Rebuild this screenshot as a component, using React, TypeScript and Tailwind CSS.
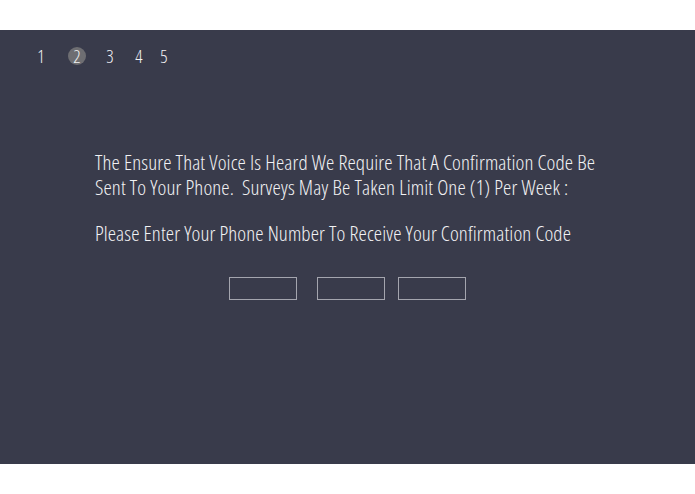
const steps = [
  { n: 1, cls: 'ml-[32px]' },
  { n: 2, cls: 'ml-[18px] rounded-full bg-[#6e6e72]' },
  { n: 3, cls: 'ml-[15px]' },
  { n: 4, cls: 'ml-[11px]' },
  { n: 5, cls: 'ml-[7px]' },
];

export default function App() {
  return (
    <div className="bg-white py-[30px] [font-family:'Open_Sans',sans-serif] [font-stretch:condensed]">
      <div className="bg-[#393b4b] h-[434px] text-[#f2f2f4] font-light">
        {/* step indicator */}
        <div className="flex items-center pt-[17px] text-[18px]">
          {steps.map((s) => (
            <div key={s.n} className={`w-[18px] h-[18px] flex items-center justify-center ${s.cls}`}>
              {s.n}
            </div>
          ))}
        </div>

        <div className="pl-[95px] pt-[85px] text-[21px] leading-[25px] tracking-[0.005em]">
          <p>The Ensure That Voice Is Heard We Require That A Confirmation Code Be</p>
          <p>Sent To Your Phone.&nbsp; Surveys May Be Taken Limit One (1) Per Week :</p>
          <p className="mt-[21px]">Please Enter Your Phone Number To Receive Your Confirmation Code</p>
        </div>

        <div className="flex pl-[229px] pt-[31px]">
          <input className="w-[68px] h-[23px] border-[1.5px] border-[#a4a5ae] bg-transparent outline-none" />
          <input className="w-[68px] h-[23px] border-[1.5px] border-[#a4a5ae] bg-transparent outline-none ml-[20px]" />
          <input className="w-[68px] h-[23px] border-[1.5px] border-[#a4a5ae] bg-transparent outline-none ml-[13px]" />
        </div>
      </div>
    </div>
  );
}
